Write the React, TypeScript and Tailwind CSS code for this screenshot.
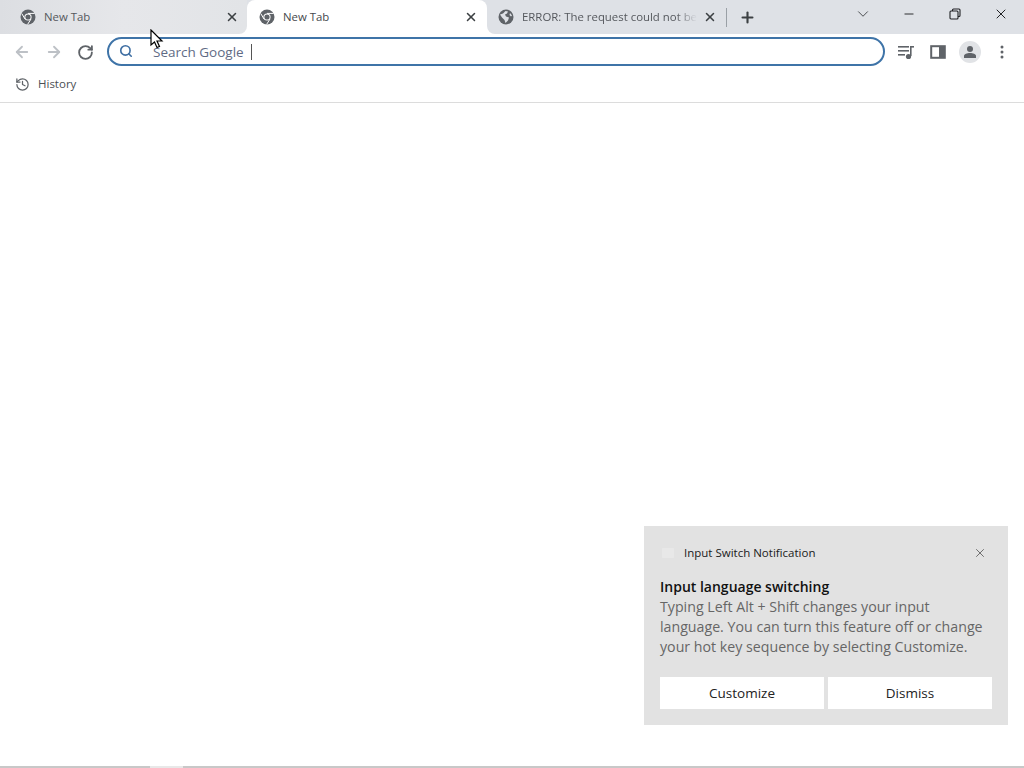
import { ArrowLeft, ArrowRight, RotateCw, Search, X, Plus, ChevronDown, Minus, History } from 'lucide-react';

const uiFont = "font-['Open_Sans','Noto_Sans',sans-serif]";

function ChromeIcon() {
  return (
    <svg width="16" height="16" viewBox="0 0 16 16" className="flex-shrink-0">
      <circle cx="8" cy="8" r="7.5" fill="#5f6368" />
      <circle cx="8" cy="8" r="3.6" fill="#ffffff" />
      <circle cx="8" cy="8" r="2.6" fill="#5f6368" />
      <path d="M8 4.4H14.6M5 10L1.8 4.6M10.9 10.2L7.6 15.4" stroke="#ffffff" strokeWidth="1" fill="none" />
    </svg>
  );
}

function GlobeIcon() {
  return (
    <svg width="16" height="16" viewBox="0 0 16 16" className="flex-shrink-0">
      <circle cx="8" cy="8" r="7.5" fill="#5f6368" />
      <path d="M2 5.5L5 4.5L7.5 2L10 2.5L9 4.5L7 5.5L8 7.5L11 8.5L10 11.5L7.5 14L6.5 11L4 8.5Z" fill="#dee1e6" />
      <path d="M12 4L14 6.5L13 7.5L11.5 6Z" fill="#dee1e6" />
    </svg>
  );
}

function Tab({ title, active, fade, icon, className }: { title: string; active?: boolean; fade?: boolean; icon: React.ReactNode; className: string }) {
  return (
    <div className={`flex h-[34px] items-center ${className}`}>
      {icon}
      <span
        className={`flex-1 whitespace-nowrap text-[11.4px] ${active ? 'text-[#45484d]' : 'text-[#55585d]'} ${
          fade ? 'mr-[-6px] [mask-image:linear-gradient(to_right,black_88%,transparent_100%)]' : ''
        }`}
      >
        {title}
      </span>
      <X className="ml-1 h-[14px] w-[14px] flex-shrink-0 text-[#3c4043]" strokeWidth={2.6} />
    </div>
  );
}

export default function App() {
  return (
    <div className={`relative flex h-screen w-[1024px] flex-col overflow-hidden bg-white ${uiFont}`}>
      {/* Tab strip */}
      <div className="flex h-[34px] items-center bg-[#dee1e6]">
        <div className="bg-white">
          <Tab
            title="New Tab"
            icon={<ChromeIcon />}
            className="w-[247px] gap-[8px] rounded-br-lg bg-gradient-to-r from-[#dcdee2] via-[#e6e7ea] to-[#e2e4e7] pl-[20px] pr-[8px]"
          />
        </div>
        <Tab title="New Tab" active icon={<ChromeIcon />} className="w-[240px] gap-[8px] rounded-t-lg bg-white pl-[12px] pr-[9px]" />
        <div className="bg-white">
          <Tab
            title="ERROR: The request could not be"
            fade
            icon={<GlobeIcon />}
            className="w-[239px] gap-[8px] rounded-bl-lg bg-[#dee1e6] pl-[11px] pr-[9px]"
          />
        </div>
        <div className="h-[19px] w-px bg-[#9aa0a6]" />
        <Plus className="ml-[12px] h-[17px] w-[17px] text-[#3c4043]" strokeWidth={3} />
        <div className="ml-auto flex h-full items-start">
          <div className="flex h-[28px] w-[46px] items-center justify-center">
            <ChevronDown className="h-[18px] w-[18px] text-[#3c4043]" strokeWidth={1.2} />
          </div>
          <div className="flex h-[28px] w-[46px] items-center justify-center">
            <Minus className="h-[14px] w-[14px] text-[#202124]" strokeWidth={1.6} />
          </div>
          <div className="flex h-[28px] w-[46px] items-center justify-center">
            <svg width="12" height="12" viewBox="0 0 12 12" fill="none" stroke="#202124" strokeWidth="1.1">
              <rect x="1" y="3" width="8" height="8" rx="1" />
              <path d="M3.5 3V2A1 1 0 0 1 4.5 1H10A1 1 0 0 1 11 2V7.5A1 1 0 0 1 10 8.5H9" />
            </svg>
          </div>
          <div className="flex h-[28px] w-[46px] items-center justify-center">
            <X className="h-[16px] w-[16px] text-[#202124]" strokeWidth={1.5} />
          </div>
        </div>
      </div>

      {/* Toolbar */}
      <div className="flex h-[34px] items-center bg-white">
        <ArrowLeft className="ml-[13px] mt-[2px] h-[18px] w-[18px] text-[#bdc1c6]" strokeWidth={2.4} />
        <ArrowRight className="ml-[14px] mt-[2px] h-[18px] w-[18px] text-[#bdc1c6]" strokeWidth={2.4} />
        <RotateCw className="ml-[14px] mt-[2px] h-[17px] w-[17px] text-[#5f6368]" strokeWidth={2.6} />
        <div className="ml-[13px] flex h-[29px] w-[778px] items-center rounded-full border-2 border-[#3f74a8] bg-white">
          <Search className="ml-[10px] h-[14px] w-[14px] text-[#3f6fa3]" strokeWidth={2.8} />
          <span className="ml-[20px] pt-[2px] text-[13.5px] text-[#5f6b85]">Search Google</span>
          <div className="ml-[7px] mt-[1px] h-[16px] w-px bg-[#555]" />
        </div>
        <svg width="18" height="16" viewBox="0 0 18 16" className="ml-[12px] mt-[2px]" fill="#5f6368">
          <rect x="1" y="2" width="11" height="1.6" />
          <rect x="1" y="6" width="11" height="1.6" />
          <rect x="1" y="10" width="7" height="1.6" />
          <rect x="13" y="2" width="4" height="1.6" />
          <rect x="13" y="2" width="1.6" height="10" />
          <circle cx="11.5" cy="12.5" r="2.6" />
        </svg>
        <svg width="16" height="16" viewBox="0 0 16 16" className="ml-[15px] mt-[2px]">
          <rect x="1.2" y="2.2" width="13.6" height="11.6" fill="none" stroke="#5f6368" strokeWidth="2" />
          <rect x="9" y="2" width="6" height="12" fill="#5f6368" />
        </svg>
        <div className="ml-[13px] mt-[2px] flex h-[22px] w-[22px] items-center justify-center rounded-full bg-[#e1e3e6]">
          <svg width="14" height="14" viewBox="0 0 14 14" fill="#5f6368">
            <circle cx="7" cy="4" r="3" />
            <path d="M1 13V11C1 9 4 8 7 8S13 9 13 11V13Z" />
          </svg>
        </div>
        <svg width="4" height="14" viewBox="0 0 4 14" className="ml-[19px] mt-[2px]" fill="#5f6368">
          <circle cx="2" cy="2" r="1.5" />
          <circle cx="2" cy="7" r="1.5" />
          <circle cx="2" cy="12" r="1.5" />
        </svg>
      </div>

      {/* Bookmarks bar */}
      <div className="flex h-[35px] items-center border-b border-[#dcdcdc] bg-white pb-[2px] pl-[15px]">
        <History className="h-[15px] w-[15px] text-[#5f6368]" strokeWidth={2} />
        <span className="ml-[8px] text-[11.5px] text-[#4b4f54]">History</span>
      </div>

      {/* Page content */}
      <div className="flex-1 bg-white" />
      <div className="flex h-[2px] bg-[#c8c8c8]">
        <div className="ml-[150px] w-[33px] bg-[#e8e8e8]" />
      </div>

      {/* Notification */}
      <div className="absolute left-[644px] top-[526px] h-[199px] w-[364px] bg-[#e2e2e2] px-[16px]">
        <div className="flex h-[54px] items-center">
          <div className="ml-[2px] h-[10px] w-[12px] rounded-[1px] bg-[#e8e8e8]" />
          <span className="ml-[10px] flex-1 text-[11.5px] text-[#1a1a1a]">Input Switch Notification</span>
          <X className="mr-[5px] h-[14px] w-[14px] text-[#555]" strokeWidth={1.4} />
        </div>
        <div className="text-[14px] font-semibold leading-[14px] text-[#111]">Input language switching</div>
        <p className="mt-[3px] text-[14.2px] leading-[20px] text-[#666]">
          Typing Left Alt + Shift changes your input language. You can turn this feature off or change your hot key sequence by selecting Customize.
        </p>
        <div className="mt-[20px] flex gap-[4px]">
          <div className="flex h-[32px] flex-1 items-center justify-center bg-white text-[13.5px] text-[#222]">Customize</div>
          <div className="flex h-[32px] flex-1 items-center justify-center bg-white text-[13.5px] text-[#222]">Dismiss</div>
        </div>
      </div>

      {/* Mouse cursor */}
      <svg width="14" height="20" viewBox="0 0 14 20" className="absolute left-[150px] top-[29px]">
        <path d="M1 1V16L4.5 13L7 18.5L9.5 17.5L7 12H12Z" fill="#fff" stroke="#000" strokeWidth="1.2" />
      </svg>
    </div>
  );
}
